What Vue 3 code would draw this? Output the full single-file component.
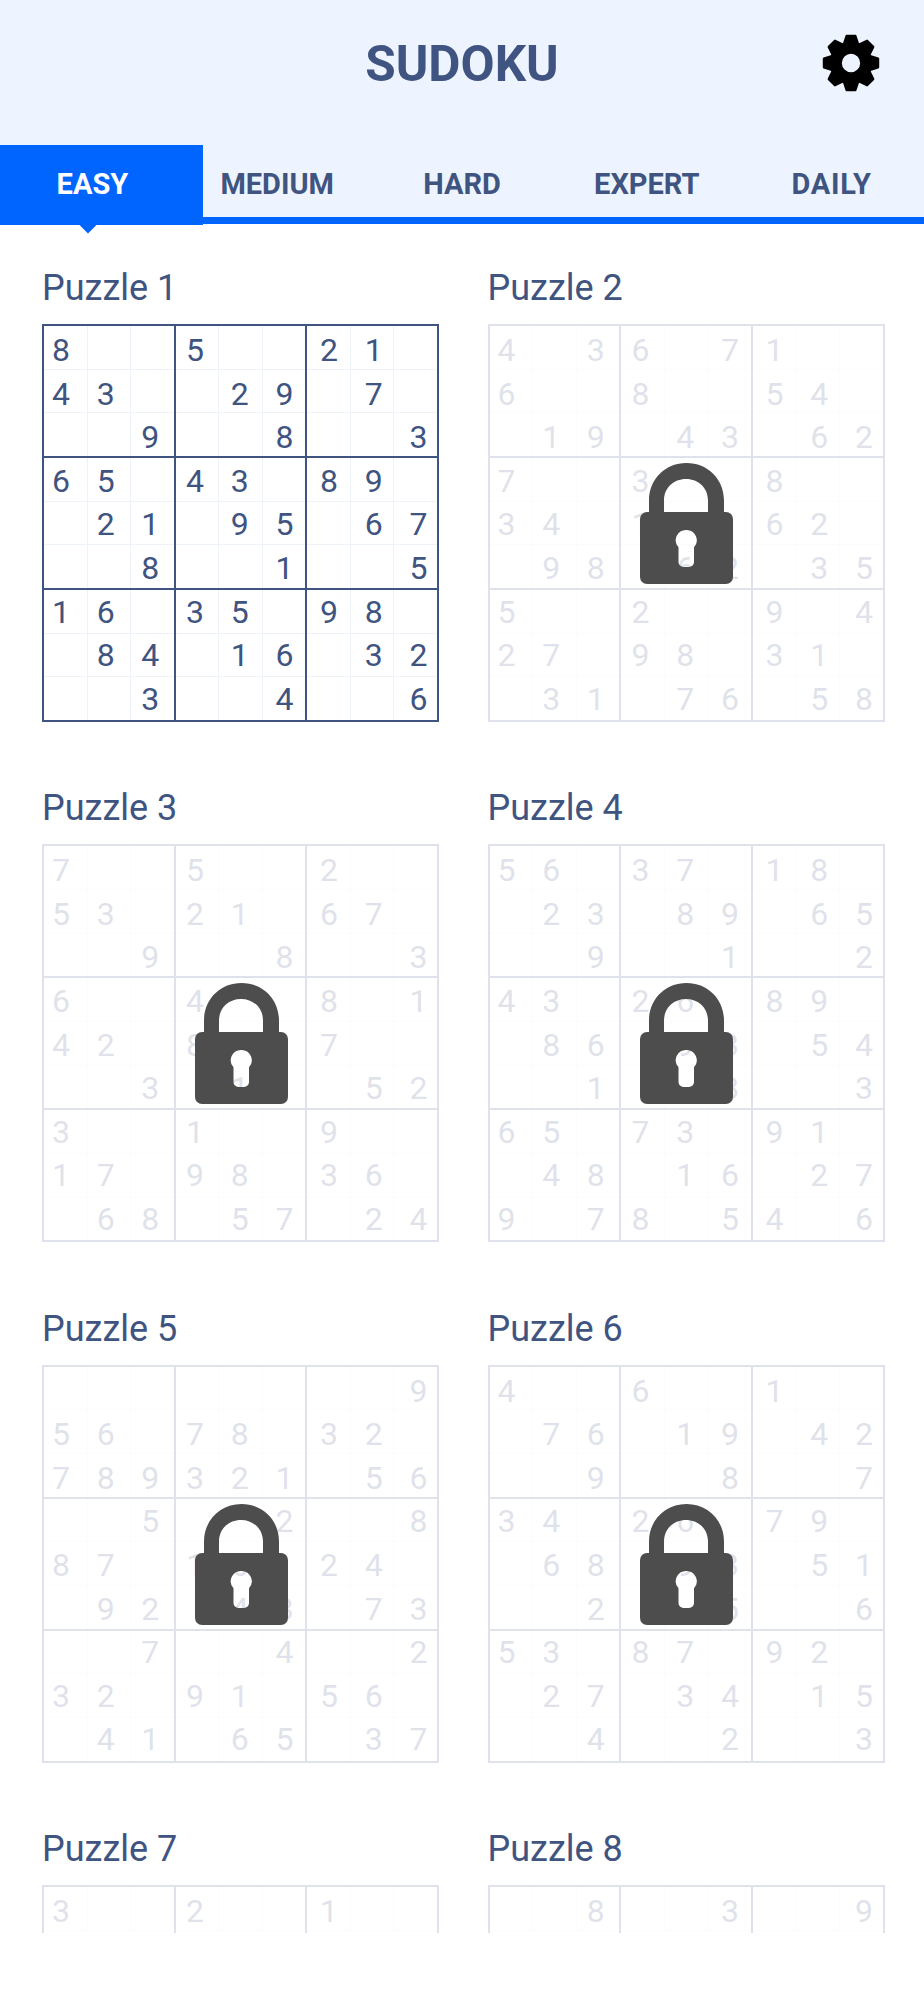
<script setup>
const tabs = ['EASY', 'MEDIUM', 'HARD', 'EXPERT', 'DAILY']

const rows = [
  '8  5  21 ' + '43  29 7 ' + '  9  8  3' + '65 43 89 ' + ' 21 95 67' + '  8  1  5' + '16 35 98 ' + ' 84 16 32' + '  3  4  6',
  '4 36 71  ' + '6  8  54 ' + ' 19 43 62' + '7  3  8  ' + '34 1  62 ' + ' 98 62 35' + '5  2  9 4' + '27 98 31 ' + ' 31 76 58',
  '7  5  2  ' + '53 21 67 ' + '  9  8  3' + '6  4  8 1' + '42 8  7  ' + '  3 1  52' + '3  1  9  ' + '17 98 36 ' + ' 68 57 24',
  '56 37 18 ' + ' 23 89 65' + '  9  1  2' + '43 26 89 ' + ' 86 93 54' + '  1  8  3' + '65 73 91 ' + ' 48 16 27' + '9 78 54 6',
  '        9' + '56 78 32 ' + '789321 56' + '  5  2  8' + '87 16 24 ' + ' 92 48 73' + '  7  4  2' + '32 91 56 ' + ' 41 65 37',
  '4  6  1  ' + ' 76 19 42' + '  9  8  7' + '34 26 79 ' + ' 68 93 51' + '  2  5  6' + '53 87 92 ' + ' 27 34 15' + '  4  2  3',
  '3  2  1  ' + '         ' + '         ' + '         ' + '         ' + '         ' + '         ' + '         ' + '         ',
  '  8  3  9' + '         ' + '         ' + '         ' + '         ' + '         ' + '         ' + '         ' + '         '
]

const puzzles = rows.map((digits, i) => ({
  name: 'Puzzle ' + (i + 1),
  digits: digits.split(''),
  locked: i > 0
}))

const teeth = [0, 45, 90, 135, 180, 225, 270, 315]
</script>

<template>
  <div class="screen">
    <header class="top">
      <div class="title-row">
        <h1 class="title">SUDOKU</h1>
        <svg class="gear" viewBox="-30 -30 60 60" aria-label="Settings">
          <circle r="15.75" fill="none" stroke="#000" stroke-width="12.5" />
          <polygon
            v-for="deg in teeth"
            :key="deg"
            points="-4.5,-28 4.5,-28 7.5,-19 -7.5,-19"
            fill="#000"
            stroke="#000"
            stroke-width="2.4"
            stroke-linejoin="round"
            :transform="`rotate(${deg})`"
          />
        </svg>
      </div>
      <nav class="tabs">
        <div v-for="(tab, i) in tabs" :key="tab" class="tab" :class="{ active: i === 0 }">
          <span class="tab-label">{{ tab }}</span>
        </div>
      </nav>
    </header>

    <main class="list">
      <section v-for="p in puzzles" :key="p.name" class="puzzle" :class="{ locked: p.locked }">
        <h2 class="name">{{ p.name }}</h2>
        <div class="board">
          <div class="sheet">
            <div class="lines">
              <div v-for="b in 9" :key="b" class="box">
                <div v-for="c in 9" :key="c" class="cell"></div>
              </div>
            </div>
            <div class="digits">
              <span v-for="(d, i) in p.digits" :key="i" class="digit">{{ d.trim() }}</span>
            </div>
          </div>
          <svg v-if="p.locked" class="lock" viewBox="0 0 93 121" aria-label="Locked">
            <path
              fill="#4d4d4d"
              fill-rule="evenodd"
              d="M9 49 V37.5 C9 16 25.5 0 46.5 0 C67.5 0 84 16 84 37.5 V49 H86 A7 7 0 0 1 93 56 V114 A7 7 0 0 1 86 121 H7 A7 7 0 0 1 0 114 V56 A7 7 0 0 1 7 49 Z M24 49 H68 V37.5 C68 25 58.5 16 46 16 C33.5 16 24 25 24 37.5 Z M46.2 67 A10.3 10.3 0 0 0 38.5 84.3 V99 A5 5 0 0 0 43.5 104 H49 A5 5 0 0 0 54 99 V84.3 A10.3 10.3 0 0 0 46.2 67 Z"
            />
          </svg>
        </div>
      </section>
    </main>
  </div>
</template>

<style>
html,
body {
  margin: 0;
  background: #fff;
}
</style>

<style scoped>
.screen {
  width: 924px;
  height: 2000px;
  background: #fff;
  font-family: Roboto, "Liberation Sans", sans-serif;
  color: #3f5480;
  overflow: hidden;
}

.top {
  background: #edf4ff;
}

.title-row {
  height: 145px;
  position: relative;
  display: flex;
  justify-content: center;
}

.title {
  margin: 0;
  padding-top: 35px;
  font-size: 49.5px;
  line-height: 58px;
  font-weight: 700;
}

.gear {
  position: absolute;
  left: 822px;
  top: 34px;
  width: 58px;
  height: 58px;
}

.tabs {
  display: flex;
  height: 72px;
  border-bottom: 7.5px solid #0064ff;
  position: relative;
}

.tab {
  flex: 1;
  position: relative;
  display: flex;
  align-items: center;
  justify-content: center;
  padding-top: 5px;
  box-sizing: border-box;
  font-size: 29px;
  font-weight: 700;
}

.tab-label {
  position: relative;
}

.tab:last-child .tab-label {
  letter-spacing: 0.8px;
}

.tab.active {
  color: #fff;
}

.tab.active::before {
  content: "";
  position: absolute;
  left: 0;
  top: 0;
  bottom: -7.5px;
  width: 203px;
  background: #0064ff;
}

.tab.active::after {
  content: "";
  position: absolute;
  left: 79px;
  bottom: -16.5px;
  width: 18px;
  height: 9px;
  background: #0064ff;
  clip-path: polygon(0 0, 100% 0, 50% 100%);
}

.list {
  height: 1709px;
  box-sizing: border-box;
  padding: 45px 39px 0 42px;
  display: grid;
  grid-template-columns: 397px 397px;
  grid-auto-rows: 520.3px;
  column-gap: 48.5px;
  overflow: hidden;
}

.name {
  margin: 0 0 17px;
  font-size: 36px;
  line-height: 38px;
  font-weight: 400;
}

.board {
  position: relative;
  width: 100%;
  height: 398px;
}

.sheet {
  width: 100%;
  height: 100%;
  position: relative;
}

.locked .sheet {
  opacity: 0.16;
}

.lines {
  width: 100%;
  height: 100%;
  box-sizing: border-box;
  display: grid;
  grid-template-columns: repeat(3, 1fr);
  grid-template-rows: repeat(3, 1fr);
  gap: 2px;
  border: 2px solid #3f5480;
  background: #3f5480;
}

.box {
  display: grid;
  grid-template-columns: repeat(3, 1fr);
  grid-template-rows: repeat(3, 1fr);
  gap: 1px;
  background: #eef2f9;
}

.cell {
  background: #fff;
}

.digits {
  position: absolute;
  left: -3.4px;
  top: 4.2px;
  display: grid;
  grid-template-columns: repeat(9, 44.7px);
  grid-auto-rows: 43.6px;
}

.digit {
  display: flex;
  align-items: center;
  justify-content: center;
  font-size: 32px;
  line-height: 1;
}

.lock {
  position: absolute;
  left: 152.5px;
  top: 139px;
  width: 93px;
  height: 121px;
}
</style>
